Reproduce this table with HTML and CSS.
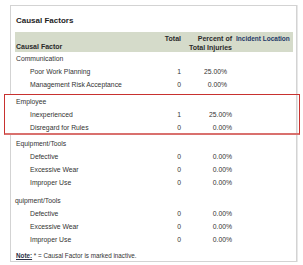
FILE: index.html
```html
<!DOCTYPE html>
<html>
<head>
<meta charset="utf-8">
<link rel="stylesheet" href="styles.css">
</head>
<body>
<div class="card">
  <h1 class="title">Causal Factors</h1>
  <div class="grid head">
    <div class="c-label head-label">Causal Factor</div>
    <div class="c-total">Total</div>
    <div class="c-pct">Percent of<br>Total Injuries</div>
    <div class="c-loc">Incident Location</div>
  </div>

  <div class="group group--shift">
    <div class="grid row"><div class="c-label">Communication</div></div>
    <div class="grid row item"><div class="c-label">Poor Work Planning</div><div class="c-total">1</div><div class="c-pct">25.00%</div></div>
    <div class="grid row item"><div class="c-label">Management Risk Acceptance</div><div class="c-total">0</div><div class="c-pct">0.00%</div></div>
  </div>

  <div class="group group--mark">
    <div class="grid row"><div class="c-label">Employee</div></div>
    <div class="grid row item"><div class="c-label">Inexperienced</div><div class="c-total">1</div><div class="c-pct">25.00%</div></div>
    <div class="grid row item"><div class="c-label">Disregard for Rules</div><div class="c-total">0</div><div class="c-pct">0.00%</div></div>
  </div>

  <div class="group">
    <div class="grid row"><div class="c-label">Equipment/Tools</div></div>
    <div class="grid row item"><div class="c-label">Defective</div><div class="c-total">0</div><div class="c-pct">0.00%</div></div>
    <div class="grid row item"><div class="c-label">Excessive Wear</div><div class="c-total">0</div><div class="c-pct">0.00%</div></div>
    <div class="grid row item"><div class="c-label">Improper Use</div><div class="c-total">0</div><div class="c-pct">0.00%</div></div>
  </div>

  <div class="group group--gap">
    <div class="grid row"><div class="c-label c-label--tight">quipment/Tools</div></div>
    <div class="grid row item"><div class="c-label">Defective</div><div class="c-total">0</div><div class="c-pct">0.00%</div></div>
    <div class="grid row item"><div class="c-label">Excessive Wear</div><div class="c-total">0</div><div class="c-pct">0.00%</div></div>
    <div class="grid row item"><div class="c-label">Improper Use</div><div class="c-total">0</div><div class="c-pct">0.00%</div></div>
  </div>

  <p class="note"><span class="note-key">Note:</span> * = Causal Factor is marked inactive.</p>
</div>
</body>
</html>
```

FILE: styles.css
```css
html, body {
  margin: 0;
  padding: 0;
  background: #ffffff;
}

body {
  font-family: "Liberation Sans", Arial, sans-serif;
  color: #333333;
}

.card {
  box-sizing: border-box;
  width: 287px;
  margin: 5px 0 0 10px;
  border: 1px solid #d3d3d3;
  box-shadow: 1px 0 0 #e8e8e8;
  background: #ffffff;
}

.title {
  margin: 0;
  padding: 10px 0 0 5px;
  font-size: 8px;
  line-height: 10px;
  font-weight: bold;
  color: #1e1e1e;
}

.grid {
  display: grid;
  grid-template-columns: 140px 26px 51px 61px;
  margin: 0 3px 0 4px;
}

.head {
  box-sizing: border-box;
  height: 20px;
  margin-top: 6px;
  padding-top: 2px;
  background: #d5dbca;
  font-size: 7px;
  line-height: 9px;
  font-weight: bold;
  color: #2a2a2a;
}

.c-label {
  padding-left: 1px;
  white-space: nowrap;
}

.c-label--tight {
  padding-left: 0;
}

.head-label {
  align-self: end;
  padding-bottom: 1px;
}

.c-total {
  text-align: right;
}

.c-pct {
  text-align: right;
  white-space: nowrap;
}

.c-loc {
  padding-left: 4px;
  font-size: 6.5px;
  color: #1f3a68;
  white-space: nowrap;
}

.row {
  height: 13px;
  font-size: 6.8px;
  line-height: 13px;
}

.item .c-label {
  padding-left: 15px;
}

.group {
  margin-top: 3.5px;
}

.group--shift {
  margin-top: 0;
}

.group--shift .c-pct {
  padding-right: 5px;
}

.group--gap {
  margin-top: 5px;
}

.group--mark {
  position: relative;
}

.group--mark::before {
  content: "";
  position: absolute;
  top: -1px;
  bottom: -1px;
  left: -7px;
  right: -4px;
  border: 1px solid #c8312f;
  border-bottom: 2px solid #d9706d;
  background: linear-gradient(to right, #ffffff 10px, transparent 10px);
}

.group--mark .row {
  position: relative;
}

.note {
  margin: 4.5px 0 0 5px;
  font-size: 6.3px;
  line-height: 10px;
  color: #333333;
}

.note-key {
  font-weight: bold;
  text-decoration: underline;
  color: #2a2f45;
}
```
